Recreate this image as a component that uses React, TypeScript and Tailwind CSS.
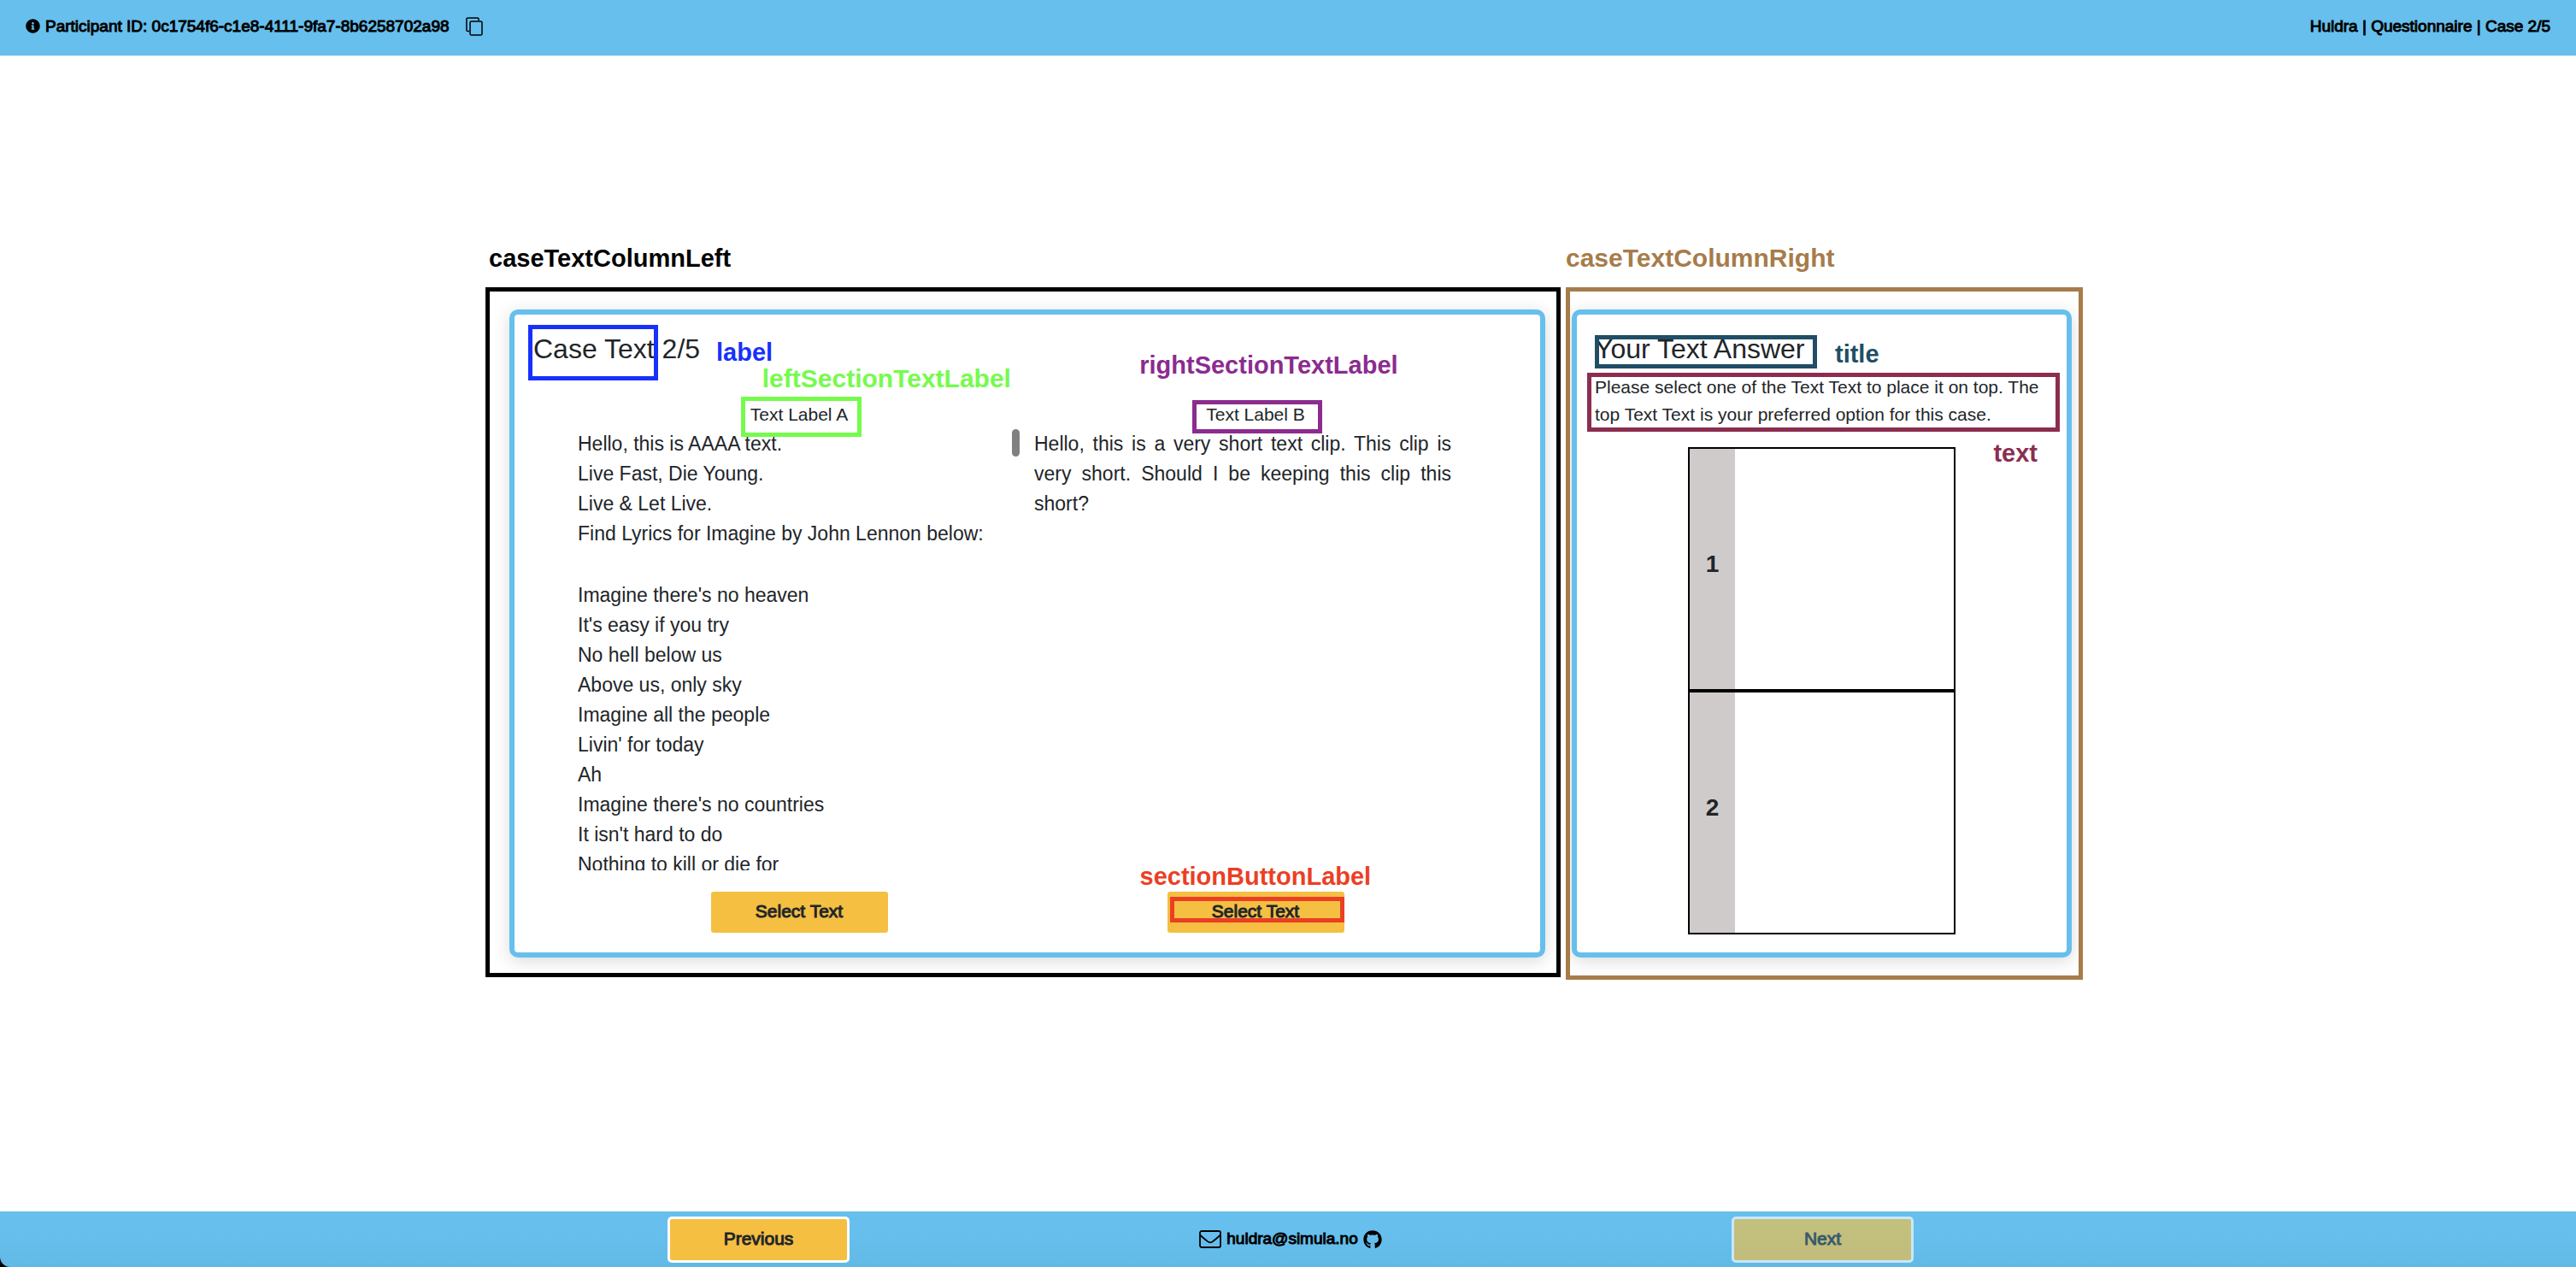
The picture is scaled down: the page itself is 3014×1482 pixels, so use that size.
import type { ReactNode } from "react";
import { FaGithub, FaInfoCircle } from "react-icons/fa";

const leftLines = [
  "Hello, this is AAAA text.",
  "Live Fast, Die Young.",
  "Live & Let Live.",
  "Find Lyrics for Imagine by John Lennon below:",
  "",
  "Imagine there's no heaven",
  "It's easy if you try",
  "No hell below us",
  "Above us, only sky",
  "Imagine all the people",
  "Livin' for today",
  "Ah",
  "Imagine there's no countries",
  "It isn't hard to do",
  "Nothing to kill or die for",
];

function CopyIcon() {
  return (
    <svg viewBox="0 0 20 22" className="h-[22px] w-5" fill="none" stroke="currentColor" strokeWidth="1.5">
      <path d="M4 16.5H2.5a1.6 1.6 0 0 1-1.6-1.6V2.5A1.6 1.6 0 0 1 2.5.9h11a1.6 1.6 0 0 1 1.6 1.6V4" />
      <rect x="5" y="5" width="14" height="16" rx="1.6" />
    </svg>
  );
}

function EnvelopeIcon() {
  return (
    <svg viewBox="0 0 26 21" className="mr-[6px] h-[21px] w-[26px]" fill="none" stroke="currentColor" strokeWidth="1.8">
      <rect x="1" y="1" width="24" height="19" rx="2" />
      <path d="M1.3 5.6c3 3.2 5.900 5.100 8.400 7.300 2.600 2.100 4 2.100 6.600 0 2.500-2.200 5.400-4.100 8.400-7.300" />
    </svg>
  );
}

function Tag({ className, children }: { className: string; children: ReactNode }) {
  return <span className={`absolute leading-8 font-bold whitespace-nowrap ${className}`}>{children}</span>;
}

function Outline({ className }: { className: string }) {
  return <span aria-hidden="true" className={`pointer-events-none absolute border-5 ${className}`} />;
}

function Card({ children }: { children: ReactNode }) {
  return (
    <section className="rounded-[10px] border-6 border-[#66bfed] bg-white pt-[21px] shadow-[0_4px_20px_rgba(0,0,0,0.15)]">
      {children}
    </section>
  );
}

function SelectButton({ children }: { children?: ReactNode }) {
  return (
    <div className="relative mt-[25px]">
      <button
        type="button"
        className="block h-12 w-[207px] rounded-[3px] bg-[#f5bf42] pb-[2px] text-[21px] leading-8 [-webkit-text-stroke:1px]"
      >
        Select Text
      </button>
      {children}
    </div>
  );
}

export default function App() {
  return (
    <div className="flex min-h-screen flex-col bg-white font-['Liberation_Sans',Arial,sans-serif] text-[#212529]">
      <header className="flex h-[65px] items-center justify-between bg-[#66bfed] px-[30px] pb-1 text-[19px] leading-7 text-black [-webkit-text-stroke:1px]">
        <div className="flex items-center">
          <FaInfoCircle className="mr-[6px] size-[17px] stroke-0" />
          <span>Participant ID: 0c1754f6-c1e8-4111-9fa7-8b6258702a98</span>
          <button type="button" aria-label="Copy participant ID" className="ml-[19px]">
            <CopyIcon />
          </button>
        </div>
        <span>Huldra | Questionnaire | Case 2/5</span>
      </header>

      <main className="grid grow grid-cols-[568fr_1258fr_6fr_605fr_577fr] items-start pt-[221px]">
        <div className="col-start-2">
          <h1 className="mb-[18px] pl-1 text-[29px] leading-8 font-bold text-black">caseTextColumnLeft</h1>
          <div className="overflow-hidden border-5 border-black pt-[21px] pr-[13px] pb-[18px] pl-[23px]">
            <Card>
              <h2 className="relative ml-[22px] text-[32px] leading-[38px]">
                Case Text 2/5
                <Outline className="-top-[9px] -left-[6px] h-[65px] w-[152px] border-[#1631fa]" />
                <Tag className="top-[7px] left-[214px] text-[29px] text-[#1631fa]">label</Tag>
              </h2>
              <div className="mx-[66px] mt-[42px] grid grid-cols-2 pb-[23px]">
                <div className="flex flex-col items-center">
                  <h3 className="relative text-[21px] leading-8">
                    Text Label A
                    <Outline className="-top-[5px] -left-[11px] h-[47px] w-[141px] border-[#75fb4c]" />
                    <Tag className="-top-[42px] left-[14px] text-[30px] text-[#75fb4c]">leftSectionTextLabel</Tag>
                  </h3>
                  <div className="relative mt-px w-full pl-2">
                    <div className="h-[516px] overflow-y-auto text-[23px] leading-[35px] [scrollbar-width:none]">
                      {leftLines.map((line, i) => (
                        <p key={i} className="min-h-[35px] empty:min-h-[37px]">
                          {line}
                        </p>
                      ))}
                    </div>
                    <span aria-hidden="true" className="absolute top-0 right-[9px] h-8 w-[9px] rounded-full bg-[#808080]" />
                  </div>
                  <SelectButton />
                </div>
                <div className="flex flex-col items-center">
                  <h3 className="relative text-[21px] leading-8">
                    Text Label B
                    <Outline className="-top-px -left-4 h-[39px] w-[152px] border-[#8b2b8f]" />
                    <Tag className="-top-[58px] -left-[78px] text-[29px] text-[#8b2b8f]">rightSectionTextLabel</Tag>
                  </h3>
                  <div className="mt-px h-[516px] w-full pr-[38px] pl-2 text-justify text-[23px] leading-[35px]">
                    Hello, this is a very short text clip. This clip is very short. Should I be keeping this clip this
                    short?
                  </div>
                  <SelectButton>
                    <Outline className="top-[6px] left-[3px] h-[30px] w-[204px] border-[#eb3f24]" />
                    <Tag className="-top-[34px] -left-8 text-[29px] text-[#eb3f24]">sectionButtonLabel</Tag>
                  </SelectButton>
                </div>
              </div>
            </Card>
          </div>
        </div>

        <div className="col-start-4">
          <h1 className="mb-[18px] text-[30px] leading-8 font-bold text-[#a67c4b]">caseTextColumnRight</h1>
          <div className="overflow-hidden border-5 border-[#a67c4b] pt-[21px] pr-2 pb-[21px] pl-[2px]">
            <Card>
              <div className="pr-4 pl-[21px]">
                <h2 className="relative text-[32px] leading-[38px]">
                  Your Text Answer
                  <Outline className="top-[3px] left-0 h-[39px] w-[260px] border-[#1f4e66]" />
                  <Tag className="top-[9px] left-[281px] text-[29px] text-[#1f4e66]">title</Tag>
                </h2>
                <p className="relative mt-[10px] text-[21px] leading-8">
                  Please select one of the Text Text to place it on top. The top Text Text is your preferred option for
                  this case.
                  <Outline className="-top-px -left-[9px] h-[69px] w-[553px] border-[#8c2d50]" />
                  <Tag className="top-[77px] right-[18px] text-[29px] text-[#8c2d50]">text</Tag>
                </p>
              </div>
              <ol className="mx-auto mt-[22px] mb-[21px] w-[313px] text-[28px] font-bold">
                {[1, 2].map((rank) => (
                  <li key={rank} className="flex h-[285px] border-2 border-black">
                    <span className="flex w-[53px] items-center justify-center bg-[#cfcbca] pb-3">{rank}</span>
                  </li>
                ))}
              </ol>
            </Card>
          </div>
        </div>
      </main>

      <div className="bg-black">
        <footer className="grid h-[65px] grid-cols-[781fr_213fr_1032fr_213fr_775fr] items-center rounded-bl-[12px] bg-linear-to-b from-[#66bfed] from-40% to-[#62b9e6] text-[21px]">
          <button
            type="button"
            className="col-start-2 h-[54px] rounded-[5px] border-3 border-white bg-[#f5bf42] pb-px [-webkit-text-stroke:1px]"
          >
            Previous
          </button>
          <div className="flex items-center justify-center text-[19px] text-black">
            <EnvelopeIcon />
            <a href="mailto:huldra@simula.no" className="[-webkit-text-stroke:1px]">
              huldra@simula.no
            </a>
            <a href="https://github.com/simula/huldra" aria-label="GitHub" className="ml-[6px]">
              <FaGithub className="size-[22px]" />
            </a>
          </div>
          <button
            type="button"
            disabled
            className="h-[54px] rounded-[5px] border-3 border-white bg-[#f5bf42] pb-px opacity-65 [-webkit-text-stroke:1px]"
          >
            Next
          </button>
        </footer>
      </div>
    </div>
  );
}
